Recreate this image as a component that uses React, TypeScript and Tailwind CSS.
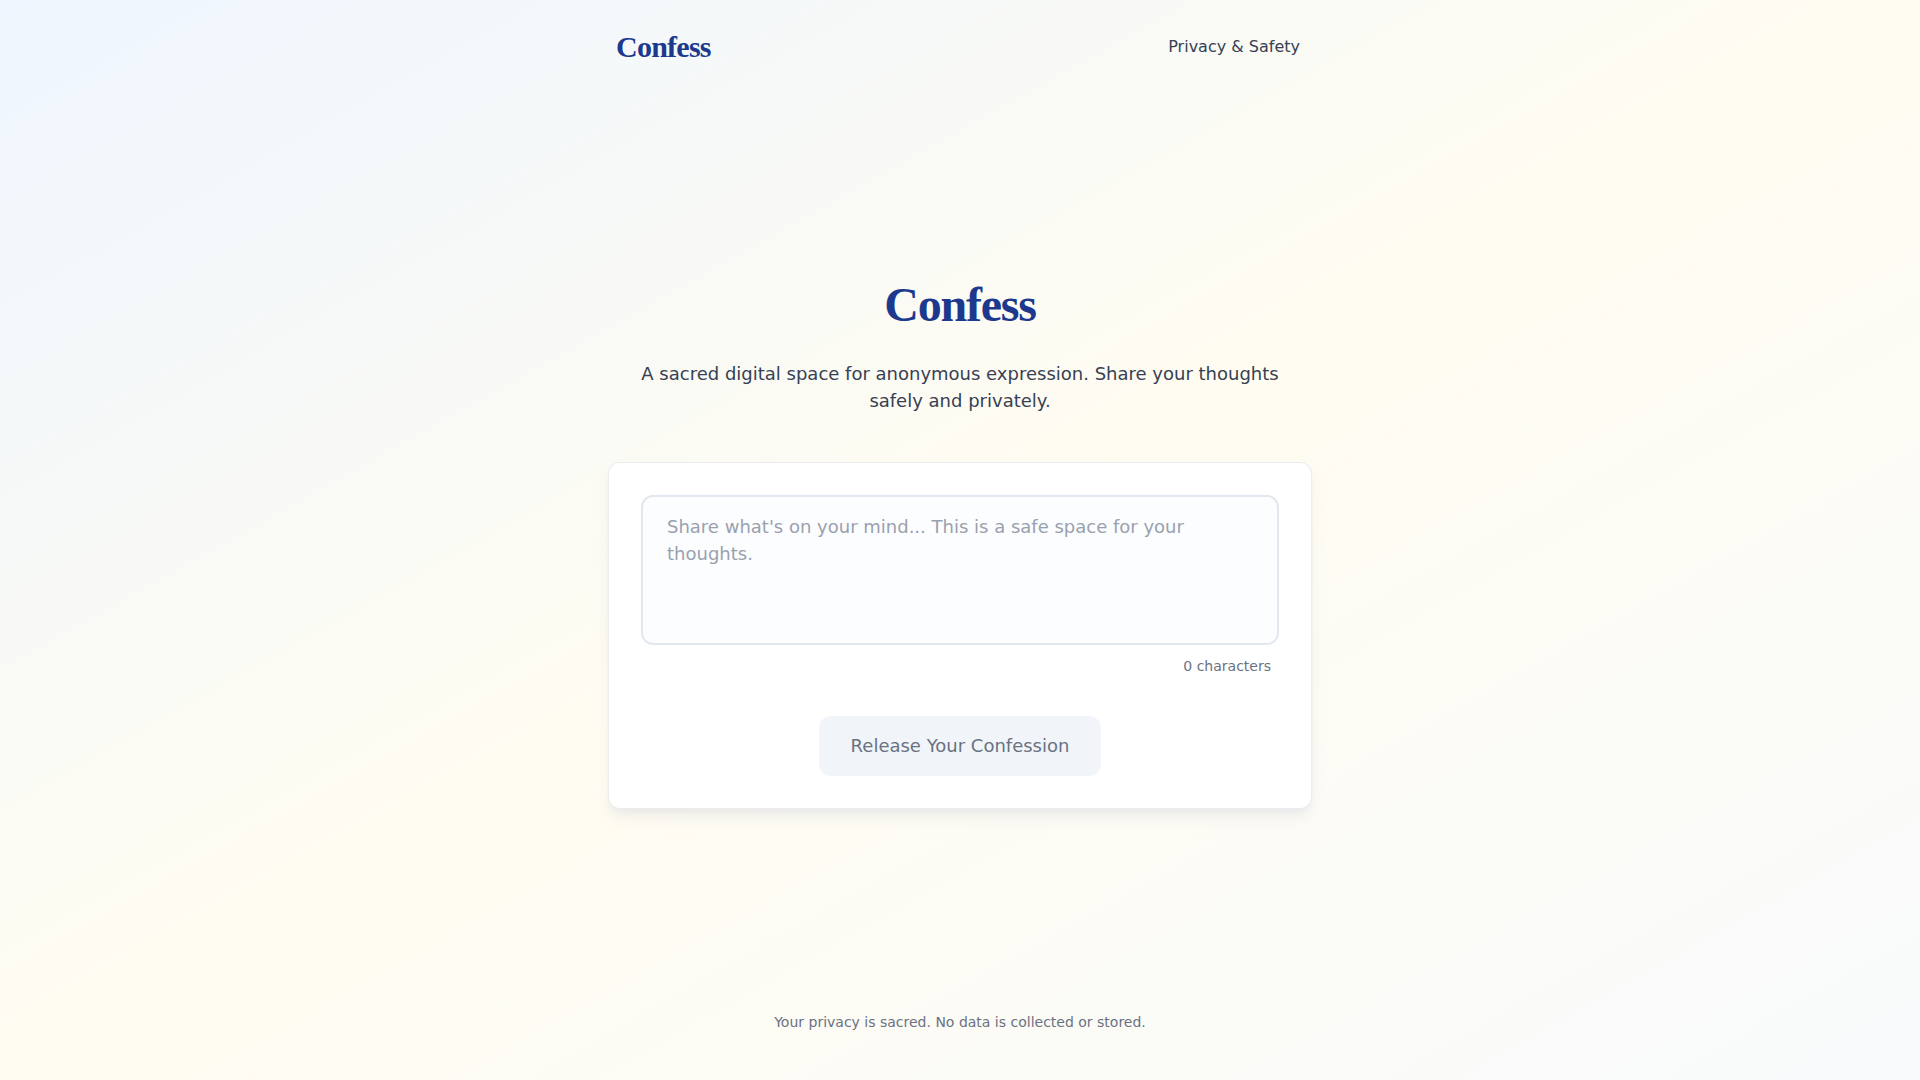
import { useState } from "react";

export default function App() {
  const [text, setText] = useState("");

  return (
    <div className="min-h-screen flex flex-col bg-linear-to-br from-blue-50 via-amber-50/70 to-slate-50 font-['DejaVu_Sans',sans-serif]">
      <header className="w-full max-w-3xl mx-auto px-8 pt-[29px] flex items-center justify-between">
        <a
          href="#"
          className="px-2 text-3xl font-bold tracking-tight text-blue-900 font-['Liberation_Serif',serif]"
        >
          Confess
        </a>
        <a href="#" className="px-3 text-base text-gray-700">
          Privacy &amp; Safety
        </a>
      </header>

      <main className="flex-1 flex flex-col items-center justify-center pt-[61px]">
        <div className="w-full max-w-3xl px-8 flex flex-col items-center">
          <h1 className="text-5xl leading-none font-bold tracking-tight text-blue-900 font-['Liberation_Serif',serif] mb-[31px]">
            Confess
          </h1>
          <p className="max-w-2xl text-center text-lg leading-[27px] text-gray-700 mb-12">
            A sacred digital space for anonymous expression. Share your thoughts
            safely and privately.
          </p>

          <div className="w-full bg-white border border-gray-200/80 rounded-xl shadow-lg shadow-gray-300/40 p-8">
            <textarea
              value={text}
              onChange={(e) => setText(e.target.value)}
              placeholder="Share what's on your mind... This is a safe space for your thoughts."
              className="w-full h-[150px] block resize-none rounded-xl border-2 border-slate-200 bg-slate-50/40 px-6 py-4 text-lg leading-[27px] text-gray-800 placeholder:text-gray-400 outline-none"
            />
            <div className="mt-[11px] px-2 text-right text-sm text-gray-500">
              {text.length} characters
            </div>
            <div className="mt-10 flex justify-center">
              <button className="px-8 py-4 rounded-xl bg-slate-100 text-lg text-gray-500">
                Release Your Confession
              </button>
            </div>
          </div>
        </div>
      </main>

      <footer className="py-12 text-center text-sm text-gray-500">
        Your privacy is sacred. No data is collected or stored.
      </footer>
    </div>
  );
}
